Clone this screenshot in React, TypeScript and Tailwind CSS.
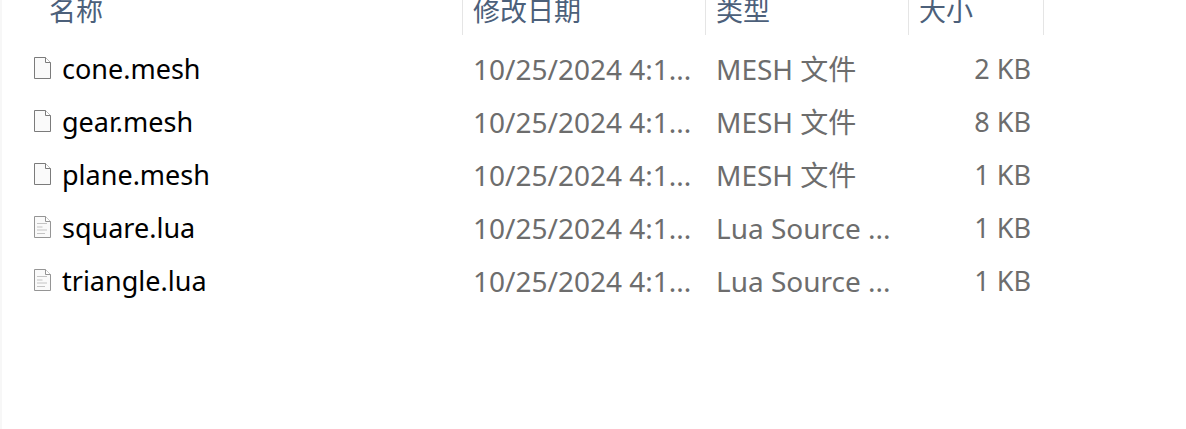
type FileKind = "blank" | "text";

interface FileEntry {
  name: string;
  modified: string;
  type: string;
  size: string;
  kind: FileKind;
}

const files: FileEntry[] = [
  { name: "cone.mesh", modified: "10/25/2024 4:1...", type: "MESH 文件", size: "2 KB", kind: "blank" },
  { name: "gear.mesh", modified: "10/25/2024 4:1...", type: "MESH 文件", size: "8 KB", kind: "blank" },
  { name: "plane.mesh", modified: "10/25/2024 4:1...", type: "MESH 文件", size: "1 KB", kind: "blank" },
  { name: "square.lua", modified: "10/25/2024 4:1...", type: "Lua Source ...", size: "1 KB", kind: "text" },
  { name: "triangle.lua", modified: "10/25/2024 4:1...", type: "Lua Source ...", size: "1 KB", kind: "text" },
];

function FileIcon({ kind }: { kind: FileKind }) {
  const stroke = kind === "blank" ? "#7b7b7b" : "#959595";
  return (
    <svg width="17" height="22" viewBox="0 0 17 22" fill="none" className="mb-0.5 shrink-0" aria-hidden="true">
      <path d="M0.5 0.5H11.5L16.5 5.5V21.5H0.5Z" fill="#fafafa" stroke={stroke} />
      <path d="M11.5 0.5V5.5H16.5" fill="#ffffff" stroke={stroke} />
      {kind === "text" && (
        <path d="M3 7.5H13M3 11H8.5M3 14H13M3 17.5H11" stroke="#c4c4c4" />
      )}
    </svg>
  );
}

function HeaderCell({ label, className }: { label: string; className: string }) {
  return (
    <th scope="col" className="border-r border-[#e5e5e5] p-0 text-left align-top font-normal">
      <button type="button" className={`block w-full text-left leading-[22px] ${className}`}>
        {label}
      </button>
    </th>
  );
}

export default function App() {
  return (
    <main className="min-h-screen overflow-hidden border-l-2 border-[#f7f7f7] bg-white font-['Noto_Sans','Noto_Sans_CJK_SC',sans-serif] text-[27px]">
      <table className="w-full table-fixed border-separate border-spacing-0">
        <colgroup>
          <col className="w-[461px]" />
          <col className="w-[243px]" />
          <col className="w-[203px]" />
          <col className="w-[135px]" />
          <col />
        </colgroup>
        <thead>
          <tr className="h-[35px] text-[#4c607a]">
            <HeaderCell label="名称" className="pl-[47px]" />
            <HeaderCell label="修改日期" className="pl-[10px]" />
            <HeaderCell label="类型" className="pl-[10px]" />
            <HeaderCell label="大小" className="pl-[10px]" />
            <td />
          </tr>
        </thead>
        <tbody className="before:block before:h-[7px] before:content-['']">
          {files.map((file) => (
            <tr key={file.name} className="h-[53px] leading-[36px] whitespace-nowrap text-[#6d6d6d]">
              <td className="p-0 pl-8">
                <div className="flex items-center gap-[11px] text-black">
                  <FileIcon kind={file.kind} />
                  <span>{file.name}</span>
                </div>
              </td>
              <td className="p-0 pl-[10px] text-[28px] leading-[36px]">{file.modified}</td>
              <td className="p-0 pl-[10px] text-[28px] leading-[36px]">{file.type}</td>
              <td className="p-0 pr-[13px] text-right">{file.size}</td>
              <td />
            </tr>
          ))}
        </tbody>
      </table>
    </main>
  );
}
